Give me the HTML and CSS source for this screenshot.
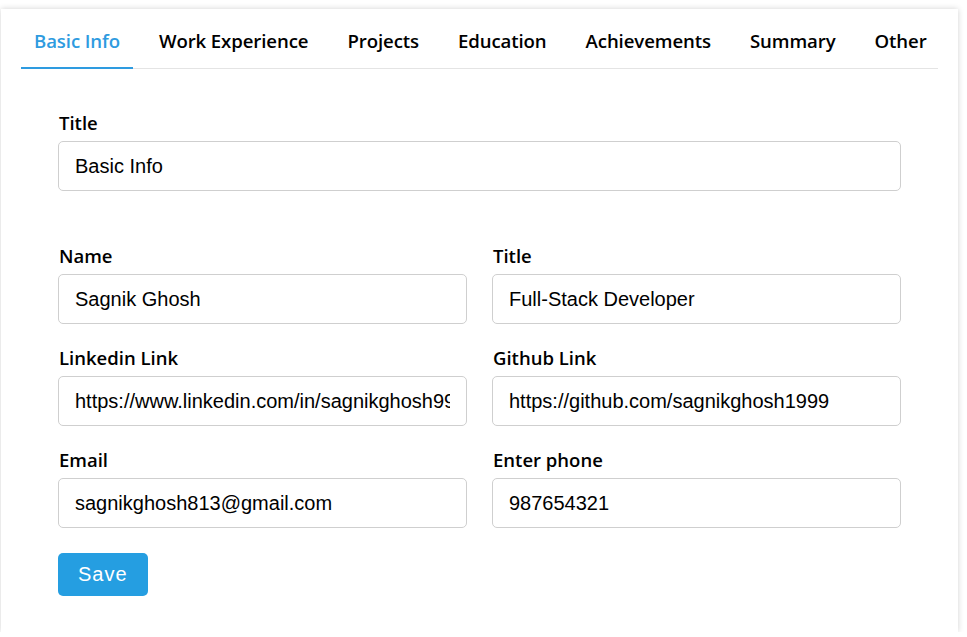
FILE: index.html
```html
<!DOCTYPE html>
<html lang="en">
<head>
<meta charset="utf-8">
<title>Resume Editor</title>
<link rel="stylesheet" href="styles.css">
</head>
<body>
<div class="card">
  <nav class="tabs">
    <div class="tab active">Basic Info</div>
    <div class="tab">Work Experience</div>
    <div class="tab">Projects</div>
    <div class="tab">Education</div>
    <div class="tab">Achievements</div>
    <div class="tab">Summary</div>
    <div class="tab">Other</div>
  </nav>
  <form class="form">
    <div class="field">
      <label class="label">Title</label>
      <input class="input" type="text" value="Basic Info">
    </div>
    <div class="grid">
      <div class="field">
        <label class="label">Name</label>
        <input class="input" type="text" value="Sagnik Ghosh">
      </div>
      <div class="field">
        <label class="label">Title</label>
        <input class="input" type="text" value="Full-Stack Developer">
      </div>
      <div class="field">
        <label class="label">Linkedin Link</label>
        <input class="input" type="text" value="https://www.linkedin.com/in/sagnikghosh99">
      </div>
      <div class="field">
        <label class="label">Github Link</label>
        <input class="input" type="text" value="https://github.com/sagnikghosh1999">
      </div>
      <div class="field">
        <label class="label">Email</label>
        <input class="input" type="text" value="sagnikghosh813@gmail.com">
      </div>
      <div class="field">
        <label class="label">Enter phone</label>
        <input class="input" type="text" value="987654321">
      </div>
    </div>
    <div class="actions">
      <button class="btn" type="button">Save</button>
    </div>
  </form>
</div>
</body>
</html>
```
FILE: styles.css
```css
* { box-sizing: border-box; }
html, body { margin: 0; padding: 0; background: #fff; }
body { padding: 9px 9px 0 1px; font-family: "Open Sans", "Noto Sans", sans-serif; color: #000; }
.card {
  background: #fff;
  box-shadow: 0 0 6px rgba(0,0,0,0.18);
  padding: 0 20px 36px 20px;
  height: 623px;
}
.tabs {
  display: flex;
  gap: 13px;
  border-bottom: 1px solid #e4e4e4;
  height: 60px;
  align-items: stretch;
}
.tab {
  flex: 0 0 auto;
  white-space: nowrap;
  padding: 0 13px;
  font-size: 18.6px;
  font-weight: 600;
  display: flex;
  align-items: center;
  padding-top: 5px;
  border-bottom: 2px solid transparent;
  margin-bottom: -1px;
  letter-spacing: -0.1px;
}
.tab.active { color: #2e9be0; border-bottom-color: #2e9be0; }
.form { padding: 41px 37px 0 37px; }
.field { display: flex; flex-direction: column; }
.label {
  font-size: 18.5px;
  font-weight: 600;
  line-height: 25px;
  margin-bottom: 6px;
  padding-left: 1px;
}
.input {
  height: 50px;
  border: 1px solid #cfcfcf;
  border-radius: 5px;
  padding: 0 16px;
  font-family: "Liberation Sans", Arial, sans-serif;
  font-size: 20px;
  color: #000;
  width: 100%;
  outline: none;
}
.grid {
  display: grid;
  grid-template-columns: 1fr 1fr;
  column-gap: 25px;
  row-gap: 21px;
  margin-top: 52px;
}
.actions { margin-top: 25px; }
.btn {
  background: #259ee1;
  color: #fff;
  border: none;
  border-radius: 5px;
  height: 43px;
  padding: 0 20px;
  font-family: "Liberation Sans", Arial, sans-serif;
  font-size: 20px;
  letter-spacing: 1px;
}
```
